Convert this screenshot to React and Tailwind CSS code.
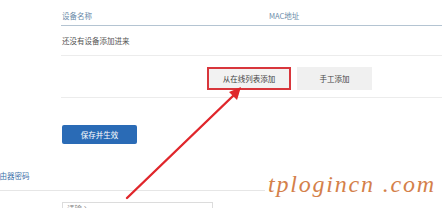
import React from 'react';

const cjk = { fontFamily: '"Noto Sans CJK SC", "Noto Sans", sans-serif' };

function Arrow(){
  // red annotation arrow, drawn over the page
  return (
    <svg className="absolute left-0 top-0 pointer-events-none" width="442" height="208" viewBox="0 0 442 208">
      <path d="M127 198 L234 95" stroke="#e0262b" strokeWidth="2.4" strokeLinecap="round" fill="none" />
      <path d="M241 87 L229 92 L237 100 Z" fill="#e0262b" />
    </svg>
  );
}

export default function App(){
  return (
    <div className="relative w-[442px] h-[208px] overflow-hidden bg-white" style={cjk}>
      <div className="pl-[61px]">
        <div className="flex h-[26px] pt-[7px] items-center border-b border-[#b4c4d2] text-[7.5px] text-[#6a8aa8]">
          <div className="w-[208px] pl-px">设备名称</div>
          <div>MAC地址</div>
        </div>
        <div className="flex h-[30px] items-center border-b border-[#ececec] pl-px text-[7.5px] text-[#555]">
          还没有设备添加进来
        </div>
        <div className="flex gap-[6px] pl-[146px] pt-[11px] pb-[7px] border-b border-[#ececec]">
          <button className="w-[84px] h-[23px] border-2 border-[#d8363c] bg-[#f2f2f2] text-[7.5px] text-[#444]">从在线列表添加</button>
          <button className="w-[75px] h-[23px] bg-[#f0f0f0] text-[7.5px] text-[#444]">手工添加</button>
        </div>
        <button className="mt-[27px] ml-px w-[75px] h-[19px] rounded-[2px] bg-[#2a6bb6] text-[7.5px] text-white">保存并生效</button>
      </div>
      <div className="pt-[27px] pb-[9px] border-b border-[#e6e6e6] w-[265px]">
        <div className="ml-[-8px] leading-[10px] text-[7.5px] text-[#3b6fa8] whitespace-nowrap">路由器密码</div>
      </div>
      <div className="ml-[62px] mt-[11px] w-[151px] h-[20px] border border-[#dcdcdc] pl-[4px] pt-[1px] leading-[10px] text-[7.5px] text-[#888]">
        请输入
      </div>
      <div
        className="absolute left-[268px] top-[170px] bg-white text-[24px] italic tracking-[1.8px] text-[#d4804a] leading-[28px] whitespace-nowrap"
        style={{ fontFamily: '"Liberation Serif", serif' }}
      >
        tplogincn .com
      </div>
      <Arrow />
    </div>
  );
}
